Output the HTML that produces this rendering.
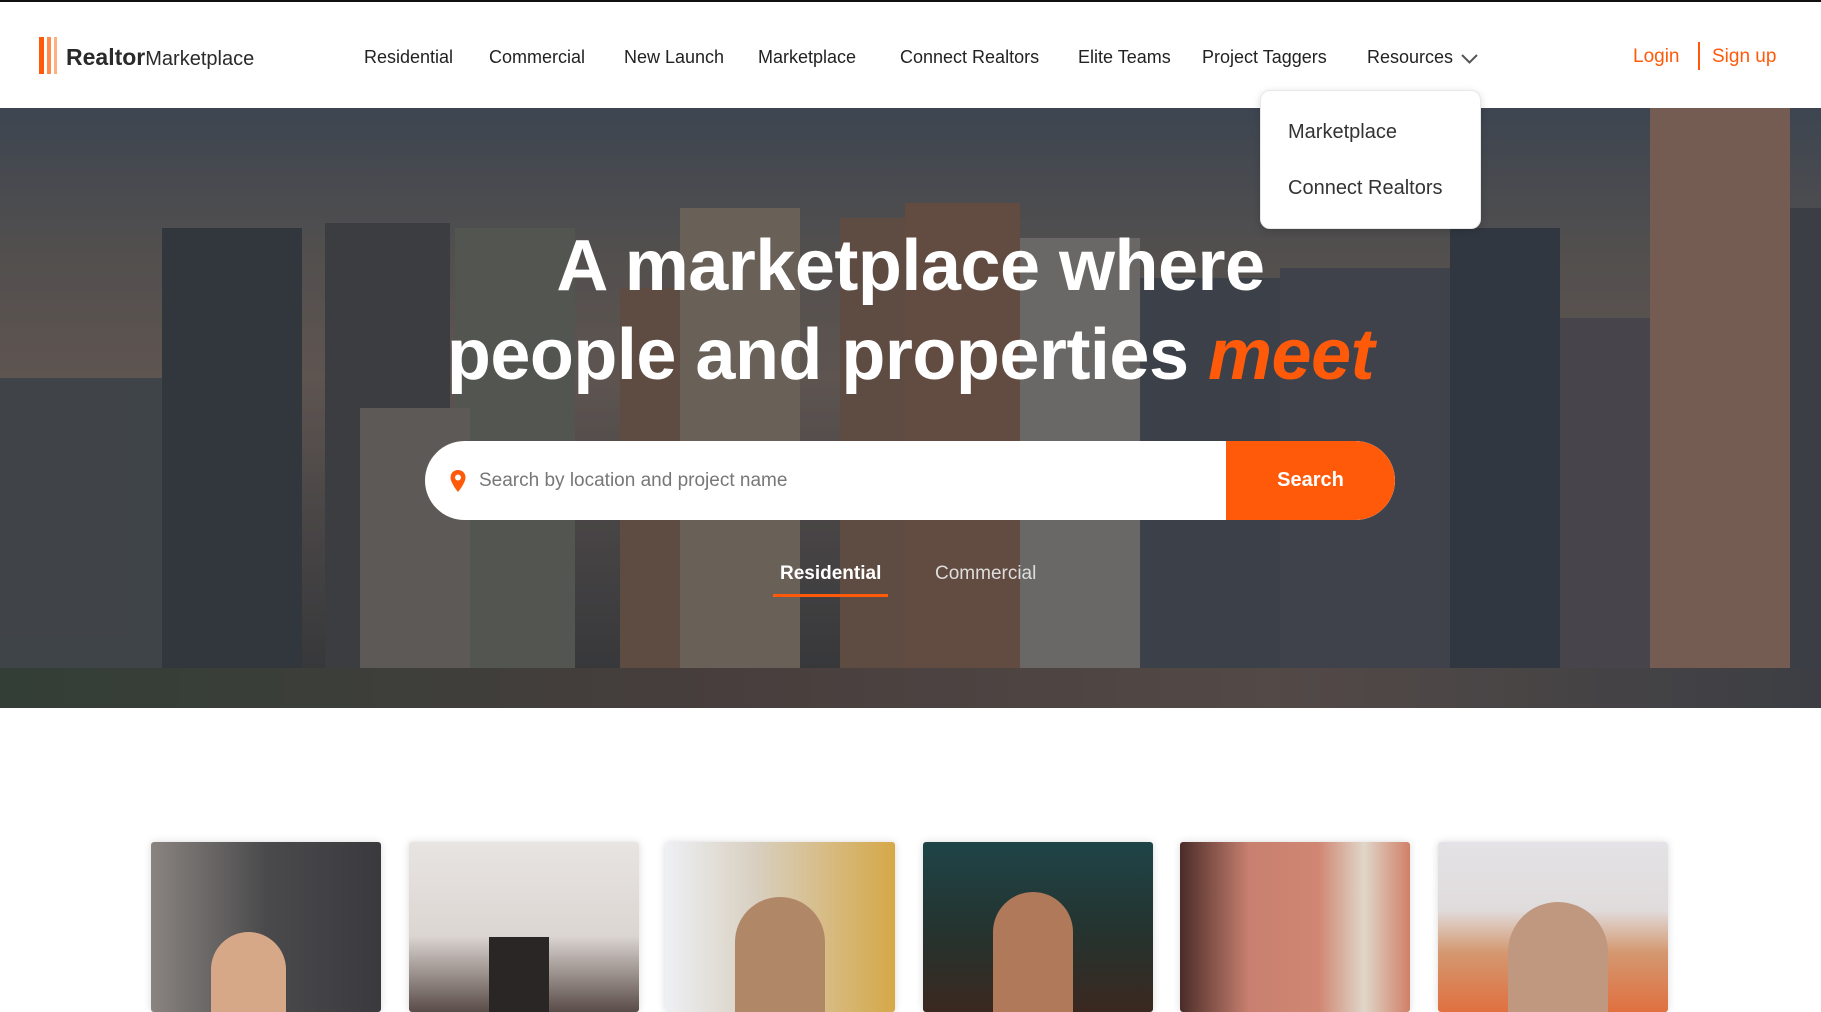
<!DOCTYPE html>
<html><head><meta charset="utf-8"><style>
*{margin:0;padding:0;box-sizing:border-box}
body{width:1821px;height:1002px;overflow:hidden;background:#fff;font-family:"Liberation Sans",sans-serif;position:relative;border-top:2px solid #111}
.hdr{position:absolute;left:0;top:0;width:1821px;height:106px;background:#fff;z-index:2}
.logo{position:absolute;left:39px;top:35px;height:37px}
.bar{position:absolute;top:0;width:5px;height:37px}
.lt{position:absolute;left:66px;top:42px;font-size:23px;color:#2a2a2a;white-space:nowrap}
.lt b{font-weight:600}.lt span{font-size:20px}
.nav a{position:absolute;top:45px;font-size:18px;color:#222;text-decoration:none;white-space:nowrap}
.or{color:#ff5a0a!important}
.hero{position:absolute;left:0;top:106px;width:1821px;height:600px;overflow:hidden;background:linear-gradient(180deg,#4b5460 0%,#6a625c 25%,#7a6a60 45%,#5b5350 70%,#3c3c3c 100%)}
.b{position:absolute;bottom:0}
.ov{position:absolute;inset:0;background:rgba(30,35,45,.3)}
h1{position:absolute;left:0;width:1821px;top:114px;text-align:center;color:#fff;font-size:72px;line-height:89px;font-weight:700;letter-spacing:-0.5px}
h1 i{color:#ff5a0a}
.sb{position:absolute;left:425px;top:333px;width:970px;height:79px;background:#fff;border-radius:40px;overflow:hidden}
.sb .btn{position:absolute;right:0;top:0;width:169px;height:79px;background:#ff5a0a;color:#fff;font-weight:700;font-size:20px;text-align:center;line-height:79px;border-radius:0 40px 40px 0}
.sb .ph{position:absolute;left:54px;top:29px;font-size:19px;color:#777}
.tab{position:absolute;top:455px;font-size:19px;color:#fff}
.dd{position:absolute;left:1260px;top:88px;width:221px;height:139px;background:#fff;border-radius:10px;box-shadow:0 2px 8px rgba(0,0,0,.15);z-index:3;border:1px solid #e8e8e8}
.dd div{position:absolute;left:27px;font-size:20px;color:#333}
.card{position:absolute;top:840px;width:230px;height:170px;box-shadow:0 0 8px rgba(0,0,0,.15);border-radius:3px}
</style></head><body>
<div class="hdr">
 <div class="logo"><div class="bar" style="left:0;background:#ff5a0a"></div><div class="bar" style="left:8px;width:4px;background:#ff8c4a"></div><div class="bar" style="left:15px;width:3px;background:#ffb080"></div></div>
 <div class="lt"><b>Realtor</b><span>Marketplace</span></div>
 <div class="nav">
  <a style="left:364px">Residential</a><a style="left:489px">Commercial</a><a style="left:624px">New Launch</a><a style="left:758px">Marketplace</a><a style="left:900px">Connect Realtors</a><a style="left:1078px">Elite Teams</a><a style="left:1202px">Project Taggers</a><a style="left:1367px">Resources</a>
  <svg style="position:absolute;left:1461px;top:52px" width="17" height="10" viewBox="0 0 17 10"><path d="M1 1l7.5 7.5L16 1" fill="none" stroke="#555" stroke-width="2"/></svg>
  <a class="or" style="left:1633px;font-size:19px;top:44px">Login</a>
  <div style="position:absolute;left:1698px;top:40px;width:2px;height:28px;background:#ff5a0a"></div>
  <a class="or" style="left:1712px;font-size:19px;top:44px">Sign up</a>
 </div>
</div>
<div class="dd"><div style="top:30px">Marketplace</div><div style="top:86px">Connect Realtors</div></div>
<div class="hero">
 <div class="b" style="left:0;width:170px;height:330px;background:#4e5254"></div>
 <div class="b" style="left:162px;width:140px;height:480px;background:#3b3f44"></div>
 <div class="b" style="left:325px;width:125px;height:485px;background:#4a4848"></div>
 <div class="b" style="left:455px;width:120px;height:480px;background:#6a6a60"></div>
 <div class="b" style="left:360px;width:110px;height:300px;background:#777068"></div>
 <div class="b" style="left:620px;width:180px;height:420px;background:#7a5e4c"></div>
 <div class="b" style="left:680px;width:120px;height:500px;background:#8a7a6a"></div>
 <div class="b" style="left:840px;width:150px;height:490px;background:#7a5c4a"></div>
 <div class="b" style="left:905px;width:115px;height:505px;background:#805c4a"></div>
 <div class="b" style="left:1020px;width:120px;height:470px;background:#8a8680"></div>
 <div class="b" style="left:1140px;width:140px;height:430px;background:#4a4c54"></div>
 <div class="b" style="left:1280px;width:170px;height:440px;background:#4e5058"></div>
 <div class="b" style="left:1450px;width:110px;height:480px;background:#3a4048"></div>
 <div class="b" style="left:1560px;width:90px;height:390px;background:#5a5458"></div>
 <div class="b" style="left:1650px;width:140px;height:600px;background:#9a7462"></div>
 <div class="b" style="left:1790px;width:31px;height:500px;background:#4a4a50"></div>
 <div class="b" style="left:0;width:1821px;height:40px;background:linear-gradient(90deg,#3c4a3a,#5a4a44 40%,#6a5a52 70%,#4a4a4e)"></div>
 <div class="ov"></div>
 <h1>A marketplace where<br>people and properties <i>meet</i></h1>
 <div class="sb">
  <svg style="position:absolute;left:24px;top:28px" width="18" height="24" viewBox="0 0 18 24"><path d="M9 1C4.6 1 1.5 4.3 1.5 8.5 1.5 14 9 23 9 23s7.5-9 7.5-14.5C16.5 4.3 13.4 1 9 1z" fill="#ff5a0a"/><circle cx="9" cy="8.5" r="3" fill="#fff"/></svg>
  <div class="ph">Search by location and project name</div>
  <div class="btn">Search</div>
 </div>
 <div class="tab" style="left:780px;font-weight:600">Residential</div>
 <div style="position:absolute;left:773px;top:486px;width:115px;height:3px;background:#ff5a0a"></div>
 <div class="tab" style="left:935px;color:#ddd">Commercial</div>
</div>
<div class="card" style="left:151px;background:linear-gradient(90deg,#8a8480 0%,#4a4a4c 50%,#3a3a3e 100%)"><div style="position:absolute;left:60px;top:90px;width:75px;height:80px;border-radius:40px 40px 0 0;background:#d6a888"></div></div>
<div class="card" style="left:409px;background:linear-gradient(180deg,#e8e4e2 0%,#dcd6d2 55%,#5a4c48 100%)"><div style="position:absolute;left:80px;top:95px;width:60px;height:75px;background:#2a2626"></div></div>
<div class="card" style="left:665px;background:linear-gradient(90deg,#eef0f4 0%,#d8cfc0 40%,#d6a848 100%)"><div style="position:absolute;left:70px;top:55px;width:90px;height:115px;border-radius:45px 45px 0 0;background:#b08868"></div></div>
<div class="card" style="left:923px;background:linear-gradient(180deg,#1e4448 0%,#243430 50%,#3a2820 100%)"><div style="position:absolute;left:70px;top:50px;width:80px;height:120px;border-radius:40px 40px 0 0;background:#b07a5a"></div></div>
<div class="card" style="left:1180px;background:linear-gradient(90deg,#4a2c28 0%,#c88070 30%,#d08672 60%,#e0d6c8 80%,#d08068 100%)"></div>
<div class="card" style="left:1438px;background:linear-gradient(180deg,#e4e2e6 0%,#e0dcdc 40%,#d49870 65%,#e07040 100%)"><div style="position:absolute;left:70px;top:60px;width:100px;height:110px;border-radius:50px 50px 0 0;background:#c09880"></div></div>
</body></html>
